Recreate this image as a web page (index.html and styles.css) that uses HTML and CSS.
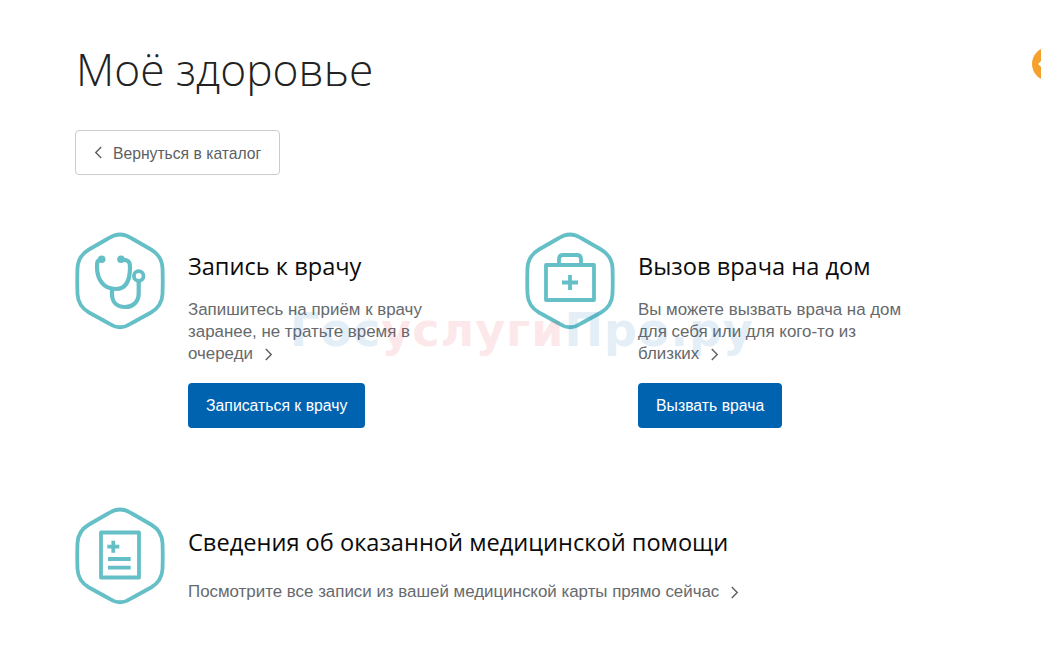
FILE: index.html
```html
<!DOCTYPE html>
<html lang="ru">
<head>
<meta charset="utf-8">
<title>Моё здоровье</title>
<link rel="stylesheet" href="styles.css">
</head>
<body>
<main class="page">
  <h1 class="title">Моё здоровье</h1>
  <a class="back" href="#"><svg class="chev-back" viewBox="0 0 8 12"><path d="M6.5 1 1.5 6l5 5"/></svg><span class="back-label">Вернуться в каталог</span></a>
  <div class="grid">
    <section class="card">
      <svg class="hex" viewBox="0 0 90 98">
        <path class="ln" d="M34 7Q45 0 56 7L76 18.500Q87 25 87.500 37Q88 50 87.500 63Q87 75 76 81.500L56 92.500Q45 100 34 92.500L14 81.500Q3 75 2.500 63Q2 50 2.500 37Q3 25 14 18.500Z"/>
        <path class="ln st" d="M26.700 28.300C22 29 22 31 22 36C22 48 28 58 41 58C51 58 55 49 55 36C55 31 54 29 46 28.300"/>
        <path class="ln st" d="M37 58V63C37 71 42 76 50 76C58 76 63.700 71 63.700 62V50"/>
        <circle class="dot" cx="26.700" cy="28.300" r="3.800"/><circle class="dot" cx="46" cy="28.300" r="3.800"/>
        <circle class="ln" cx="63.700" cy="45" r="4.800"/>
      </svg>
      <div class="body">
        <h2 class="head">Запись к врачу</h2>
        <p class="text">Запишитесь на приём к врачу<br>заранее, не тратьте время в<br>очереди<svg class="chev" viewBox="0 0 8 12"><path d="M1.500 1l5 5-5 5"/></svg></p>
        <a class="btn" href="#">Записаться к врачу</a>
      </div>
    </section>
    <section class="card">
      <svg class="hex" viewBox="0 0 90 98">
        <path class="ln" d="M34 7Q45 0 56 7L76 18.500Q87 25 87.500 37Q88 50 87.500 63Q87 75 76 81.500L56 92.500Q45 100 34 92.500L14 81.500Q3 75 2.500 63Q2 50 2.500 37Q3 25 14 18.500Z"/>
        <rect class="ln" x="21" y="34" width="48" height="35"/>
        <path class="ln" d="M34 34V28Q34 24 38 24H52Q56 24 56 28V34M45 44V59M37 51.500H53"/>
      </svg>
      <div class="body">
        <h2 class="head">Вызов врача на дом</h2>
        <p class="text">Вы можете вызвать врача на дом<br>для себя или для кого-то из<br>близких<svg class="chev" viewBox="0 0 8 12"><path d="M1.500 1l5 5-5 5"/></svg></p>
        <a class="btn" href="#">Вызвать врача</a>
      </div>
    </section>
    <section class="card wide">
      <svg class="hex" viewBox="0 0 90 98">
        <path class="ln" d="M34 7Q45 0 56 7L76 18.500Q87 25 87.500 37Q88 50 87.500 63Q87 75 76 81.500L56 92.500Q45 100 34 92.500L14 81.500Q3 75 2.500 63Q2 50 2.500 37Q3 25 14 18.500Z"/>
        <rect class="ln" x="26" y="26.500" width="38" height="45"/>
        <path class="ln" d="M38.300 34.700V46.700M32.300 40.700H44.300M33 53H55.700M33 61.700H55.700"/>
      </svg>
      <div class="body wide-body">
        <h2 class="head">Сведения об оказанной медицинской помощи</h2>
        <p class="text">Посмотрите все записи из вашей медицинской карты прямо сейчас<svg class="chev" viewBox="0 0 8 12"><path d="M1.500 1l5 5-5 5"/></svg></p>
      </div>
    </section>
  </div>
</main>
<div class="mark"><span class="mark-blue">Гос</span><span class="mark-red">услуги</span><span class="mark-blue">Про.ру</span></div>
<div class="badge"><svg class="badge-chev" viewBox="0 0 8 12"><path d="M6.500 1 1.500 6l5 5"/></svg></div>
</body>
</html>
```

FILE: styles.css
```css
* { box-sizing: border-box; }
html, body { margin: 0; height: 100%; overflow: hidden; background: #fff; }
body { font-family: "Liberation Sans", Arial, sans-serif; color: #000; }
.page { padding: 37px 0 0 75px; }
.title {
  margin: 0 0 29px 1px;
  font-family: "Open Sans", sans-serif;
  font-weight: 300;
  font-size: 44.300px;
  line-height: 64px;
  color: #222;
}
.back {
  display: flex;
  align-items: center;
  width: 205px;
  height: 45px;
  padding-left: 18px;
  border: 1px solid #c9ccd0;
  border-radius: 4px;
  font-size: 15.700px;
  color: #5c5f62;
  text-decoration: none;
}
.back-label { padding-top: 2px; }
.chev-back { width: 9px; height: 13px; margin-right: 10px; }
.chev-back path, .chev path { fill: none; stroke: #5c5f62; stroke-width: 1.300; }
.grid {
  display: grid;
  grid-template-columns: 450px 450px;
  grid-template-rows: 275px auto;
  margin-top: 56px;
}
.card { display: flex; align-items: flex-start; gap: 23px; }
.wide { grid-column: 1 / span 2; }
.hex { width: 90px; height: 98px; flex: none; overflow: visible; }
.ln { fill: none; stroke: #65bfc7; stroke-width: 3.800; stroke-linejoin: round; }
.st { stroke-width: 4.200; }
.dot { fill: #65bfc7; }
.body { padding-top: 18px; }
.wide-body { padding-top: 19px; }
.head {
  margin: 0 0 16px;
  font-family: "Open Sans", sans-serif;
  font-weight: 400;
  font-size: 23.600px;
  line-height: 34px;
  color: #0b0b0b;
}
.wide .head { margin-bottom: 22px; }
.text { margin: 0 0 18px; font-size: 16.900px; line-height: 22px; color: #66696c; }
.chev { width: 9px; height: 13px; margin-left: 11px; vertical-align: -2px; }
.btn {
  display: inline-block;
  height: 45px;
  padding: 0 18px;
  border-radius: 4px;
  background: #0063b0;
  color: #fff;
  font-size: 15.800px;
  line-height: 45px;
  text-decoration: none;
}
.mark {
  position: absolute;
  left: 290px;
  top: 305px;
  font-family: "DejaVu Sans", sans-serif;
  font-size: 46px;
  font-weight: 700;
  letter-spacing: 1px;
  line-height: 50px;
  white-space: nowrap;
  opacity: .1;
}
.mark-blue { color: #0063b0; }
.mark-red { color: #e8283c; }
.badge {
  position: absolute;
  left: 1032px;
  top: 47px;
  width: 34px;
  height: 34px;
  padding: 11px 0 0 6px;
  border-radius: 50%;
  background: #f6a02d;
}
.badge-chev { display: block; width: 8px; height: 12px; }
.badge-chev path { fill: none; stroke: #fff; stroke-width: 2; }
```
